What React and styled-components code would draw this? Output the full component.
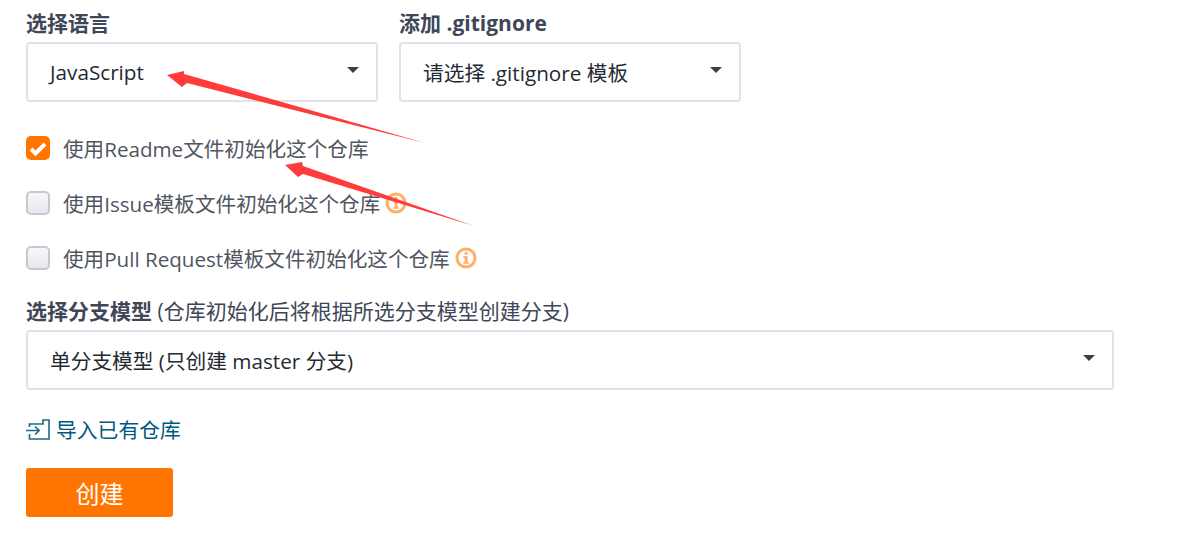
import React from "react";
import styled, { createGlobalStyle } from "styled-components";

const Global = createGlobalStyle`
  html, body { margin: 0; padding: 0; background: #fff; }
  body { font-family: "Open Sans", "Noto Sans CJK SC", sans-serif; }
`;

const Page = styled.div`
  position: relative;
  width: 1183px;
  height: 545px;
  overflow: hidden;
  padding: 12px 0 0 26px;
  box-sizing: border-box;
`;

const Row = styled.div`
  display: flex;
  gap: 21px;
`;

const Field = styled.div`
  display: flex;
  flex-direction: column;
  gap: 7px;
  width: ${(p) => p.$w}px;
`;

const Label = styled.div`
  font-size: 21px;
  line-height: 23px;
  font-weight: 700;
  color: #3e4658;
  white-space: nowrap;
`;

const LabelNote = styled.span`
  font-weight: 400;
`;

const Select = styled.div`
  box-sizing: border-box;
  height: 60px;
  border: 2px solid #dfe3e9;
  border-radius: 4px;
  background: #fff;
  display: flex;
  align-items: center;
  justify-content: space-between;
  padding: 0 17px 0 22px;
  font-size: 20.7px;
  color: #232a33;
`;

const Caret = styled.span`
  width: 0;
  height: 0;
  border-left: 6px solid transparent;
  border-right: 6px solid transparent;
  border-top: 6px solid #3c4048;
  margin-top: -4px;
`;

const Checks = styled.div`
  display: flex;
  flex-direction: column;
  gap: 31px;
  margin-top: 34px;
`;

const CheckRow = styled.div`
  display: flex;
  align-items: center;
  height: 24px;
  gap: 13px;
  font-size: 20.6px;
  color: #50565f;
  white-space: nowrap;
`;

const Box = styled.span`
  box-sizing: border-box;
  width: 24px;
  height: 24px;
  flex: none;
  border-radius: 5px;
  display: flex;
  align-items: center;
  justify-content: center;
  background: ${(p) => (p.$on ? "#ff7500" : "linear-gradient(#f6f7f9, #e6e8ee)")};
  border: ${(p) => (p.$on ? "none" : "2px solid #c6c9cf")};
`;

const RowText = styled.span`
  display: inline-flex;
  align-items: center;
  gap: 5px;
`;

const BranchField = styled(Field)`
  margin-top: 30px;
`;

const ImportLink = styled.a`
  display: flex;
  align-items: center;
  gap: 6px;
  margin-top: 26px;
  height: 26px;
  font-size: 20.8px;
  color: #005980;
  text-decoration: none;
`;

const CreateButton = styled.button`
  display: block;
  width: 147px;
  height: 49px;
  margin-top: 26px;
  border: none;
  border-radius: 3px;
  background: #ff7500;
  color: #fff;
  font-family: inherit;
  font-size: 24px;
  padding: 0;
`;

const ArrowLayer = styled.svg`
  position: absolute;
  inset: 0;
  pointer-events: none;
`;

const Info = () => (
  <svg width="22" height="22" viewBox="0 0 22 22" aria-hidden="true">
    <circle cx="11" cy="11" r="9" fill="#fff" stroke="#ffaf66" strokeWidth="3" />
    <rect x="9.6" y="4.8" width="3" height="3" fill="#ffaf66" />
    <path d="M8.2 9h4.4v6.2h1.4v1.6H8.2v-1.6h1.4v-4.6H8.2z" fill="#ffaf66" />
  </svg>
);

const ImportIcon = () => (
  <svg width="24" height="21" viewBox="0 0 24 21" fill="none" stroke="#1d6a87" strokeWidth="1.6" aria-hidden="true">
    <path d="M3.5 8V5H17V1h6v19H3.5v-5" />
    <path d="M0 11.5h13M9 7.5l4.2 4-4.2 4" />
  </svg>
);

export default function App() {
  return (
    <Page>
      <Global />
      <Row>
        <Field $w={352}>
          <Label>选择语言</Label>
          <Select>JavaScript<Caret /></Select>
        </Field>
        <Field $w={342}>
          <Label>添加 .gitignore</Label>
          <Select>请选择 .gitignore 模板<Caret /></Select>
        </Field>
      </Row>
      <Checks>
        <CheckRow>
          <Box $on>
            <svg width="18" height="15" viewBox="0 0 18 15" aria-hidden="true">
              <path d="M2 8l4.5 4.5L16 3" fill="none" stroke="#fff" strokeWidth="4" />
            </svg>
          </Box>
          <RowText>使用Readme文件初始化这个仓库</RowText>
        </CheckRow>
        <CheckRow>
          <Box />
          <RowText>使用Issue模板文件初始化这个仓库<Info /></RowText>
        </CheckRow>
        <CheckRow>
          <Box />
          <RowText>使用Pull Request模板文件初始化这个仓库<Info /></RowText>
        </CheckRow>
      </Checks>
      <BranchField $w={1088}>
        <Label>选择分支模型 <LabelNote>(仓库初始化后将根据所选分支模型创建分支)</LabelNote></Label>
        <Select>单分支模型 (只创建 master 分支)<Caret /></Select>
      </BranchField>
      <ImportLink><ImportIcon />导入已有仓库</ImportLink>
      <CreateButton>创建</CreateButton>
      <ArrowLayer width="1183" height="545" viewBox="0 0 1183 545" aria-hidden="true">
        <path d="M425 143 L184 74 L184 71 L167 75 L182 87 L187 83 Z" fill="#ff3b3b" />
        <path d="M474 226 L303 166 L302 162 L285 165 L298 177 L303 174 Z" fill="#ff3b3b" />
      </ArrowLayer>
    </Page>
  );
}
